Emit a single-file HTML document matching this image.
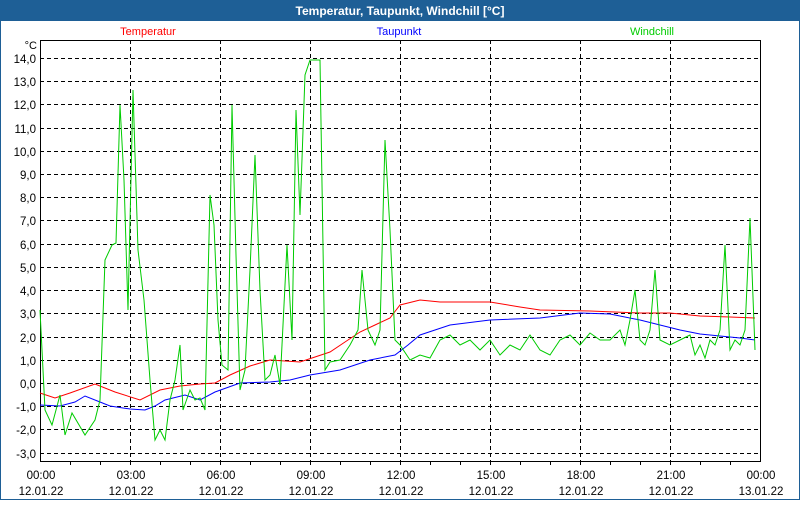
<!DOCTYPE html>
<html><head><meta charset="utf-8"><style>
body{margin:0;width:800px;height:500px;overflow:hidden;background:#fff;font-family:"Liberation Sans","DejaVu Sans",sans-serif}
</style></head><body>
<svg width="800" height="500" xmlns="http://www.w3.org/2000/svg" font-family="Liberation Sans, DejaVu Sans, sans-serif">
<rect x="0" y="0" width="800" height="500" fill="#1e5f96"/>
<rect x="1" y="21" width="798" height="478" fill="#fff"/>
<text x="400" y="15" fill="#fff" font-size="12" font-weight="bold" text-anchor="middle">Temperatur, Taupunkt, Windchill [°C]</text>
<text x="148" y="35" fill="#ff0000" font-size="11" text-anchor="middle">Temperatur</text>
<text x="399" y="35" fill="#0000ff" font-size="11" text-anchor="middle">Taupunkt</text>
<text x="652" y="35" fill="#00cc00" font-size="11" text-anchor="middle">Windchill</text>
<text x="37" y="49" font-size="11" text-anchor="end">°C</text>
<g stroke="#000" stroke-dasharray="4,3" stroke-width="1">
<line x1="40" x2="760" y1="58.5" y2="58.5"/><line x1="40" x2="760" y1="81.5" y2="81.5"/><line x1="40" x2="760" y1="104.5" y2="104.5"/><line x1="40" x2="760" y1="128.5" y2="128.5"/><line x1="40" x2="760" y1="151.5" y2="151.5"/><line x1="40" x2="760" y1="174.5" y2="174.5"/><line x1="40" x2="760" y1="197.5" y2="197.5"/><line x1="40" x2="760" y1="220.5" y2="220.5"/><line x1="40" x2="760" y1="244.5" y2="244.5"/><line x1="40" x2="760" y1="267.5" y2="267.5"/><line x1="40" x2="760" y1="290.5" y2="290.5"/><line x1="40" x2="760" y1="313.5" y2="313.5"/><line x1="40" x2="760" y1="337.5" y2="337.5"/><line x1="40" x2="760" y1="360.5" y2="360.5"/><line x1="40" x2="760" y1="383.5" y2="383.5"/><line x1="40" x2="760" y1="406.5" y2="406.5"/><line x1="40" x2="760" y1="429.5" y2="429.5"/><line x1="40" x2="760" y1="453.5" y2="453.5"/>
<line x1="130.5" x2="130.5" y1="40" y2="461"/><line x1="220.5" x2="220.5" y1="40" y2="461"/><line x1="310.5" x2="310.5" y1="40" y2="461"/><line x1="400.5" x2="400.5" y1="40" y2="461"/><line x1="490.5" x2="490.5" y1="40" y2="461"/><line x1="580.5" x2="580.5" y1="40" y2="461"/><line x1="670.5" x2="670.5" y1="40" y2="461"/>
</g>
<rect x="40.5" y="40.5" width="720" height="421" fill="none" stroke="#000" stroke-width="1"/>
<g stroke="#000"><line x1="70.5" x2="70.5" y1="461" y2="465"/><line x1="100.5" x2="100.5" y1="461" y2="465"/><line x1="130.5" x2="130.5" y1="461" y2="465"/><line x1="160.5" x2="160.5" y1="461" y2="465"/><line x1="190.5" x2="190.5" y1="461" y2="465"/><line x1="220.5" x2="220.5" y1="461" y2="465"/><line x1="250.5" x2="250.5" y1="461" y2="465"/><line x1="280.5" x2="280.5" y1="461" y2="465"/><line x1="310.5" x2="310.5" y1="461" y2="465"/><line x1="340.5" x2="340.5" y1="461" y2="465"/><line x1="370.5" x2="370.5" y1="461" y2="465"/><line x1="400.5" x2="400.5" y1="461" y2="465"/><line x1="430.5" x2="430.5" y1="461" y2="465"/><line x1="460.5" x2="460.5" y1="461" y2="465"/><line x1="490.5" x2="490.5" y1="461" y2="465"/><line x1="520.5" x2="520.5" y1="461" y2="465"/><line x1="550.5" x2="550.5" y1="461" y2="465"/><line x1="580.5" x2="580.5" y1="461" y2="465"/><line x1="610.5" x2="610.5" y1="461" y2="465"/><line x1="640.5" x2="640.5" y1="461" y2="465"/><line x1="670.5" x2="670.5" y1="461" y2="465"/><line x1="700.5" x2="700.5" y1="461" y2="465"/><line x1="730.5" x2="730.5" y1="461" y2="465"/></g>
<g font-size="11.5" text-anchor="end">
<text x="36" y="63">14,0</text><text x="36" y="86">13,0</text><text x="36" y="109">12,0</text><text x="36" y="133">11,0</text><text x="36" y="156">10,0</text><text x="36" y="179">9,0</text><text x="36" y="202">8,0</text><text x="36" y="225">7,0</text><text x="36" y="249">6,0</text><text x="36" y="272">5,0</text><text x="36" y="295">4,0</text><text x="36" y="318">3,0</text><text x="36" y="342">2,0</text><text x="36" y="365">1,0</text><text x="36" y="388">0,0</text><text x="36" y="411">-1,0</text><text x="36" y="434">-2,0</text><text x="36" y="458">-3,0</text>
</g>
<g font-size="11.5" text-anchor="middle">
<text x="41" y="479">00:00</text><text x="41" y="495">12.01.22</text>
<text x="131" y="479">03:00</text><text x="131" y="495">12.01.22</text>
<text x="221" y="479">06:00</text><text x="221" y="495">12.01.22</text>
<text x="311" y="479">09:00</text><text x="311" y="495">12.01.22</text>
<text x="401" y="479">12:00</text><text x="401" y="495">12.01.22</text>
<text x="491" y="479">15:00</text><text x="491" y="495">12.01.22</text>
<text x="581" y="479">18:00</text><text x="581" y="495">12.01.22</text>
<text x="671" y="479">21:00</text><text x="671" y="495">12.01.22</text>
<text x="761" y="479">00:00</text><text x="761" y="495">13.01.22</text>
</g>
<polyline fill="none" stroke="#ff0000" stroke-width="1" points="40,393 55,398 70,393 95,384 115,392 140,400 160,390 180,386 200,384 215,383 230,375 250,366 270,360 300,362 330,352 345,342 360,332 375,325 390,318 400,305 420,300 440,302 490,302 520,307 540,310 590,311 640,313 670,313 700,316 730,317 755,318"/>
<polyline fill="none" stroke="#0000ff" stroke-width="1" points="40,405 60,406 75,402 85,396 100,402 110,406 130,409 145,410 155,406 165,400 185,395 200,400 215,392 240,383 270,382 290,380 310,375 340,370 370,360 395,355 408,345 420,335 450,325 490,320 540,318 580,313 610,314 640,320 660,325 680,330 700,334 720,336 740,338 755,340"/>
<polyline fill="none" stroke="#00cc00" stroke-width="1" points="40,310 45,410 52,425 60,395 65,435 72,413 85,435 95,420 100,400 105,260 112,245 116,243 120,105 124,180 128,310 133,90 138,250 144,300 150,380 155,440 160,430 165,440 170,400 175,380 180,345 183,410 190,390 195,400 200,398 205,410 210,195 214,225 218,320 222,365 228,370 232,105 236,255 240,390 245,370 250,270 255,155 260,290 265,380 270,375 275,355 280,385 287,245 292,340 296,110 300,215 305,75 310,60 320,60 325,370 330,362 340,360 350,345 358,330 362,270 368,330 375,345 380,330 385,140 390,230 395,340 400,345 410,360 420,355 430,358 440,340 450,335 460,345 470,340 480,350 490,340 500,355 510,345 520,350 530,335 540,350 550,355 560,340 570,335 580,345 590,333 600,340 610,340 620,330 625,345 630,320 635,290 640,340 645,345 650,330 655,270 660,340 670,345 680,340 690,335 695,355 700,345 705,358 710,340 715,345 720,330 725,245 730,350 735,340 740,345 745,330 750,218 755,350"/>
</svg>
</body></html>
